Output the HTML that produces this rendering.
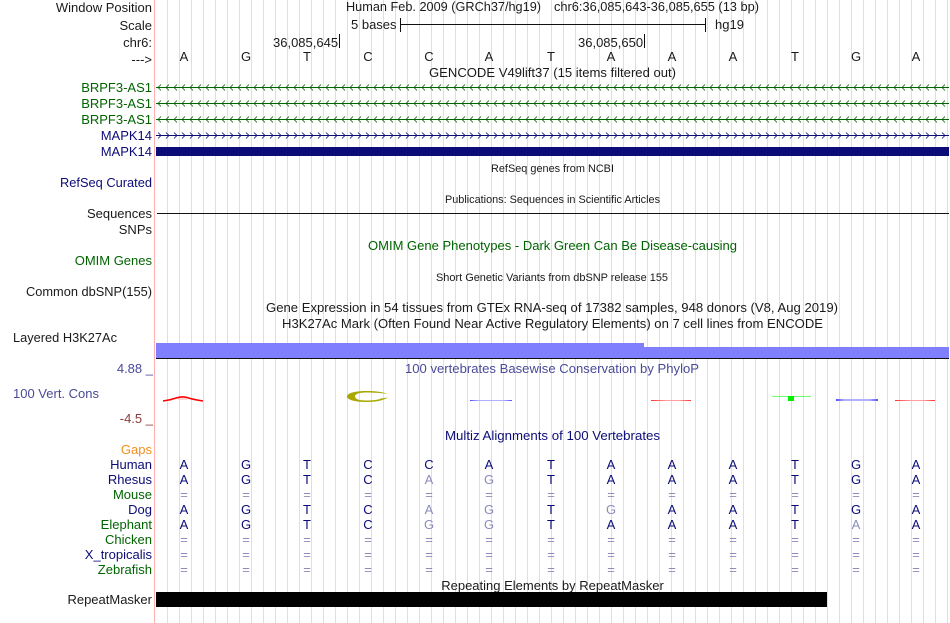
<!DOCTYPE html>
<html><head><meta charset="utf-8"><style>
html,body{margin:0;padding:0;background:#fff;width:950px;height:623px;overflow:hidden}
svg{display:block}
text{font-family:"Liberation Sans",sans-serif;font-size:13px;fill:#1a1a1a}
.r{text-anchor:end}.m{text-anchor:middle}
.s{font-size:11px}
.g{fill:#006400}.n{fill:#0c0c78}.p{fill:#8c8cbc}
.v{fill:#4a4a98}
</style></head><body>
<svg width="950" height="623" viewBox="0 0 950 623" xmlns="http://www.w3.org/2000/svg">
<defs>
<pattern id="grid" x="167" y="0" width="12" height="623" patternUnits="userSpaceOnUse"><rect x="0" y="0" width="1" height="623" fill="#dcdcf4"/></pattern>
<pattern id="cl" x="157" y="84" width="8" height="8" patternUnits="userSpaceOnUse"><path d="M4 0.5L1 3.5L4 6.5" fill="none" stroke="#006400" stroke-width=".8"/></pattern>
<pattern id="cl2" x="157" y="100" width="8" height="8" patternUnits="userSpaceOnUse"><path d="M4 0.5L1 3.5L4 6.5" fill="none" stroke="#006400" stroke-width=".8"/></pattern>
<pattern id="cl3" x="157" y="116" width="8" height="8" patternUnits="userSpaceOnUse"><path d="M4 0.5L1 3.5L4 6.5" fill="none" stroke="#006400" stroke-width=".8"/></pattern>
<pattern id="cr" x="157" y="132" width="8" height="8" patternUnits="userSpaceOnUse"><path d="M1 0.5L4 3.5L1 6.5" fill="none" stroke="#0c0c78" stroke-width=".8"/></pattern>
<linearGradient id="bl"><stop offset="0" stop-color="#5050ff"/><stop offset=".2" stop-color="#b0b0ff"/><stop offset=".8" stop-color="#b0b0ff"/><stop offset="1" stop-color="#5050ff"/></linearGradient>
<linearGradient id="rd"><stop offset="0" stop-color="#ff3030"/><stop offset=".4" stop-color="#ffa0a0"/><stop offset=".7" stop-color="#ffa0a0"/><stop offset="1" stop-color="#ff3030"/></linearGradient>
</defs>
<rect x="156" width="794" height="623" fill="url(#grid)"/>
<rect x="154" y="0" width="1" height="623" fill="#ffb0b0"/>

<text class="r" x="152" y="12">Window Position</text>
<text class="r" x="152" y="30">Scale</text>
<text class="r" x="152" y="47">chr6:</text>
<text class="r" x="152" y="64">---&gt;</text>
<text x="346" y="11" textLength="195" lengthAdjust="spacingAndGlyphs">Human Feb. 2009 (GRCh37/hg19)</text>
<text x="554" y="11" textLength="205" lengthAdjust="spacingAndGlyphs">chr6:36,085,643-36,085,655 (13 bp)</text>
<text x="351" y="29">5 bases</text>
<path d="M400.5 18V32M401 24.5H705M705.5 18V32" stroke="#111" fill="none"/>
<text x="715" y="29">hg19</text>
<text x="273" y="47">36,085,645</text>
<path d="M339.5 34V48" stroke="#111"/>
<text x="578" y="47">36,085,650</text>
<path d="M644.5 34V48" stroke="#111"/>
<text class="m" x="184 246 307 368 429 489 551 611 672 733 795 856 916" y="61">AGTCCATAAATGA</text>
<text class="m" x="552.5" y="77" textLength="247" lengthAdjust="spacingAndGlyphs">GENCODE V49lift37 (15 items filtered out)</text>

<text class="r g" x="152" y="92">BRPF3-AS1</text>
<text class="r g" x="152" y="108">BRPF3-AS1</text>
<text class="r g" x="152" y="124">BRPF3-AS1</text>
<text class="r n" x="152" y="140">MAPK14</text>
<text class="r n" x="152" y="156">MAPK14</text>

<rect x="156" y="87" width="793" height="1" fill="#006400"/>
<rect x="156" y="103" width="793" height="1" fill="#006400"/>
<rect x="156" y="119" width="793" height="1" fill="#006400"/>
<rect x="156" y="135" width="793" height="1" fill="#0c0c78"/>
<rect x="156" y="84" width="793" height="8" fill="url(#cl)"/>
<rect x="156" y="100" width="793" height="8" fill="url(#cl2)"/>
<rect x="156" y="116" width="793" height="8" fill="url(#cl3)"/>
<rect x="156" y="132" width="793" height="8" fill="url(#cr)"/>
<rect x="156" y="147" width="793" height="9" fill="#0c0c78"/>

<text class="m s" x="552.5" y="172" textLength="123" lengthAdjust="spacingAndGlyphs">RefSeq genes from NCBI</text>
<text class="r n" x="152" y="187" textLength="92" lengthAdjust="spacingAndGlyphs">RefSeq Curated</text>
<text class="m s" x="552.5" y="203" textLength="215" lengthAdjust="spacingAndGlyphs">Publications: Sequences in Scientific Articles</text>
<text class="r" x="152" y="218">Sequences</text>
<rect x="157" y="213" width="792" height="1" fill="#111"/>
<text class="r" x="152" y="234">SNPs</text>
<text class="m g" x="552.5" y="250" textLength="369" lengthAdjust="spacingAndGlyphs">OMIM Gene Phenotypes - Dark Green Can Be Disease-causing</text>
<text class="r g" x="152" y="265">OMIM Genes</text>
<text class="m s" x="552" y="281" textLength="232" lengthAdjust="spacingAndGlyphs">Short Genetic Variants from dbSNP release 155</text>
<text class="r" x="152" y="296" textLength="126" lengthAdjust="spacingAndGlyphs">Common dbSNP(155)</text>
<text class="m" x="552" y="312" textLength="572" lengthAdjust="spacingAndGlyphs">Gene Expression in 54 tissues from GTEx RNA-seq of 17382 samples, 948 donors (V8, Aug 2019)</text>
<text class="m" x="552.5" y="328" textLength="541" lengthAdjust="spacingAndGlyphs">H3K27Ac Mark (Often Found Near Active Regulatory Elements) on 7 cell lines from ENCODE</text>
<text x="13" y="342" textLength="104" lengthAdjust="spacingAndGlyphs">Layered H3K27Ac</text>
<rect x="156" y="343" width="488" height="15" fill="#8080ff"/>
<rect x="644" y="347" width="305" height="11" fill="#8080ff"/>
<rect x="156" y="358" width="793" height="1" fill="#111"/>

<text class="r v" x="153" y="373">4.88 _</text>
<text class="m v" x="552" y="373" textLength="294" lengthAdjust="spacingAndGlyphs">100 vertebrates Basewise Conservation by PhyloP</text>
<text class="v" x="13" y="398">100 Vert. Cons</text>
<text class="r" style="fill:#8c3c3c" x="153" y="423">-4.5 _</text>

<path d="M163 401C170 400 175 398.5 178 397.5C181 396.7 184 396.7 187 397.5C190 398.5 196 400 203 401" fill="none" stroke="#ff0000" stroke-width="1.6"/>
<path d="M178 399H187" stroke="#ffb0b0"/>
<path fill-rule="evenodd" d="M388 394C382 391.5 373 391 366 391C354 391 347 393.5 347 396.5C347 399.5 354 402 367 402C376 402 383 400.5 388 397.5L381 398.5C378 400 372 400.5 366 400.5C359 400.5 355 399 355 396.5C355 394 359 392.5 366 392.5C374 392.5 381 393 388 394Z" fill="#a8a800"/>
<rect x="470" y="400" width="42" height="1" fill="url(#bl)"/>
<rect x="651" y="400" width="40" height="1" fill="url(#rd)"/>
<rect x="772" y="396" width="39" height="1" fill="#70ff70"/>
<rect x="788" y="396" width="6" height="5" fill="#00f000"/>
<rect x="836" y="399" width="42" height="2" fill="url(#bl)"/>
<rect x="895" y="400" width="40" height="1" fill="url(#rd)"/>

<text class="m n" x="552.5" y="440" textLength="215" lengthAdjust="spacingAndGlyphs">Multiz Alignments of 100 Vertebrates</text>
<text class="r" style="fill:#f09020" x="152" y="454">Gaps</text>
<text class="r n" x="152" y="469">Human</text>
<text class="r n" x="152" y="484">Rhesus</text>
<text class="r g" x="152" y="499">Mouse</text>
<text class="r n" x="152" y="514">Dog</text>
<text class="r g" x="152" y="529">Elephant</text>
<text class="r g" x="152" y="544">Chicken</text>
<text class="r n" x="152" y="559">X_tropicalis</text>
<text class="r g" x="152" y="574">Zebrafish</text>

<text class="m n" x="184 246 307 368 429 489 551 611 672 733 795 856 916" y="469">AGTCCATAAATGA</text>
<text class="m n" x="184 246 307 368 551 611 672 733 795 856 916" y="484">AGTCTAAATGA</text>
<text class="m p" x="429 489" y="484">AG</text>
<text class="m p" x="184 246 307 368 429 489 551 611 672 733 795 856 916" y="499">=============</text>
<text class="m n" x="184 246 307 368 551 672 733 795 856 916" y="514">AGTCTAATGA</text>
<text class="m p" x="429 489 611" y="514">AGG</text>
<text class="m n" x="184 246 307 368 551 611 672 733 795 916" y="529">AGTCTAAATA</text>
<text class="m p" x="429 489 856" y="529">GGA</text>
<text class="m p" x="184 246 307 368 429 489 551 611 672 733 795 856 916" y="544">=============</text>
<text class="m p" x="184 246 307 368 429 489 551 611 672 733 795 856 916" y="559">=============</text>
<text class="m p" x="184 246 307 368 429 489 551 611 672 733 795 856 916" y="574">=============</text>

<text class="m" x="552.5" y="590">Repeating Elements by RepeatMasker</text>
<text class="r" x="152" y="604">RepeatMasker</text>
<rect x="156" y="592" width="671" height="15" fill="#000"/>
</svg>
</body></html>
